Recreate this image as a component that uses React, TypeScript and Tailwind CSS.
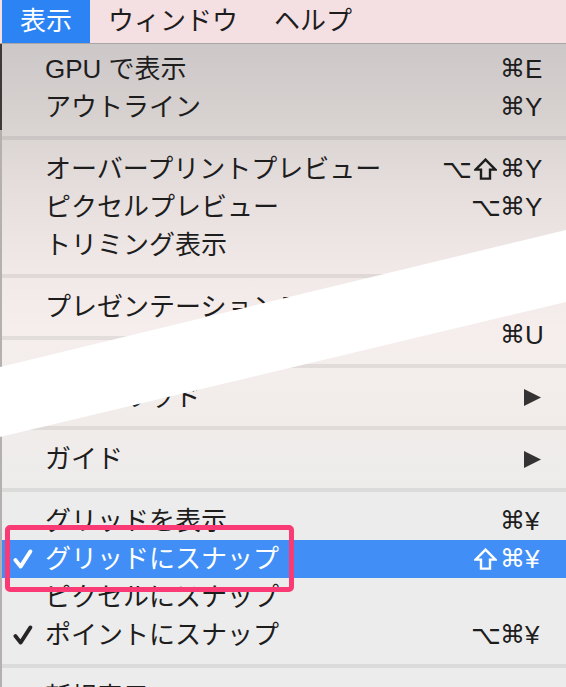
import React from "react";

type Item =
  | { kind: "sep" }
  | {
      kind: "row";
      label: string;
      mods?: string[];
      k?: string;
      sub?: boolean;
      check?: boolean;
      hi?: boolean;
    };

const topItems: Item[] = [
  { kind: "row", label: "GPU で表示", mods: ["⌘"], k: "E" },
  { kind: "row", label: "アウトライン", mods: ["⌘"], k: "Y" },
  { kind: "sep" },
  { kind: "row", label: "オーバープリントプレビュー", mods: ["⌥", "⇧", "⌘"], k: "Y" },
  { kind: "row", label: "ピクセルプレビュー", mods: ["⌥", "⌘"], k: "Y" },
  { kind: "row", label: "トリミング表示" },
  { kind: "sep" },
  { kind: "row", label: "プレゼンテーションモード" },
  { kind: "sep" },
  { kind: "row", label: "画面モード", sub: true },
];

const bottomItems: Item[] = [
  { kind: "row", label: "スマートガイド", mods: ["⌘"], k: "U" },
  { kind: "sep" },
  { kind: "row", label: "遠近グリッド", sub: true },
  { kind: "sep" },
  { kind: "row", label: "ガイド", sub: true },
  { kind: "sep" },
  { kind: "row", label: "グリッドを表示", mods: ["⌘"], k: "¥" },
  { kind: "row", label: "グリッドにスナップ", mods: ["⇧", "⌘"], k: "¥", check: true, hi: true },
  { kind: "row", label: "ピクセルにスナップ" },
  { kind: "row", label: "ポイントにスナップ", mods: ["⌥", "⌘"], k: "¥", check: true },
  { kind: "sep" },
  { kind: "row", label: "新規表示..." },
];

function Check({ color }: { color: string }) {
  return (
    <svg width="20" height="20" viewBox="0 0 20 20" className="ml-[11px]">
      <path
        d="M2.4 11 L7.6 17.6 L17.4 2.4"
        fill="none"
        stroke={color}
        strokeWidth="3.8"
        strokeLinecap="round"
        strokeLinejoin="round"
      />
    </svg>
  );
}

function Triangle() {
  return (
    <svg width="17" height="17" viewBox="0 0 17 17" className="mr-[25px] shrink-0">
      <polygon points="0,0 17,8.5 0,17" fill="#343232" />
    </svg>
  );
}

function ShiftIcon({ color }: { color: string }) {
  return (
    <svg width="23" height="22" viewBox="0 0 23 22">
      <path
        d="M11.5 1.6 L21.4 11.6 L16 11.6 L16 20.6 L7 20.6 L7 11.6 L1.6 11.6 Z"
        fill="none"
        stroke={color}
        strokeWidth="2.4"
        strokeLinejoin="miter"
      />
    </svg>
  );
}

function Shortcut({ mods, k, hi }: { mods: string[]; k: string; hi?: boolean }) {
  return (
    <div className="flex items-center mr-[20px] shrink-0 font-['DejaVu_Sans','Liberation_Sans',sans-serif] leading-[38px]">
      {mods.map((m, i) =>
        m === "⇧" ? (
          <span key={i} className="w-[29px] flex justify-center">
            <ShiftIcon color={hi ? "#ffffff" : "#1e1d1d"} />
          </span>
        ) : m === "⌘" ? (
          <span key={i} className="w-[25px] text-center text-[25px]">
            {m}
          </span>
        ) : (
          <span key={i} className="w-[29px] text-center text-[26px]">
            {m}
          </span>
        )
      )}
      <span className="w-[21px] text-left font-['Liberation_Sans','DejaVu_Sans',sans-serif] text-[26px]">
        {k}
      </span>
    </div>
  );
}

function Rows({ items }: { items: Item[] }) {
  return (
    <>
      {items.map((it, i) => {
        if (it.kind === "sep") {
          return (
            <div key={i} className="h-[24px] shrink-0 flex items-center">
              <div className="h-[4px] w-full bg-black/[0.07]" />
            </div>
          );
        }
        return (
          <div
            key={i}
            className={
              it.hi
                ? "relative flex items-center h-[38px] shrink-0 bg-[#418ff6] text-white"
                : "relative flex items-center h-[38px] shrink-0 text-[#1e1d1d]"
            }
          >
            <div className="w-[43px] h-full flex items-center shrink-0">
              {it.check && <Check color={it.hi ? "#ffffff" : "#262424"} />}
            </div>
            <div className="flex-1 text-[26px] leading-[38px] whitespace-nowrap overflow-hidden">
              {it.label}
            </div>
            {it.mods && it.k && <Shortcut mods={it.mods} k={it.k} hi={it.hi} />}
            {it.sub && <Triangle />}
            {it.hi && (
              <div className="absolute left-[3px] top-[-15px] w-[289px] h-[67px] border-[5px] border-[#f93a74] rounded-[5px] z-10" />
            )}
          </div>
        );
      })}
    </>
  );
}

const BG =
  "bg-[linear-gradient(180deg,#cdc8c8_44px,#d6d0cf_110px,#e5dedd_190px,#f1e9e7_270px,#f5eeec_330px,#f1ecea_420px,#ececec_500px)]";

export default function App() {
  return (
    <div className="grid grid-cols-1 grid-rows-1 w-[566px] h-[687px] overflow-hidden bg-white font-['Liberation_Sans','Noto_Sans_CJK_JP',sans-serif]">
      {/* upper part of the torn screenshot */}
      <div
        className={`col-start-1 row-start-1 min-h-0 overflow-hidden flex flex-col ${BG} [clip-path:polygon(0_0,100%_0,100%_230px,0_367px)]`}
      >
        <div className="h-[44px] shrink-0 flex bg-[#f4e0e3] border-b border-[#aaa5a6] text-[26px] leading-[43px] text-[#1e1d1d]">
          <div className="ml-[2px] px-[18px] bg-[#2c84f4] text-white">表示</div>
          <div className="px-[18px]">ウィンドウ</div>
          <div className="px-[18px]">ヘルプ</div>
        </div>
        <div className="flex flex-1 min-h-0">
          <div className="w-[2px] shrink-0 bg-[linear-gradient(180deg,#3d3939_0px,#3d3939_86px,#b4b0b0_86px)]" />
          <div className="flex-1 flex flex-col pt-[6px]">
            <Rows items={topItems} />
          </div>
        </div>
      </div>

      {/* lower part of the torn screenshot */}
      <div
        className={`col-start-1 row-start-1 min-h-0 overflow-hidden flex ${BG} [clip-path:polygon(0_437px,100%_302px,100%_100%,0_100%)]`}
      >
        <div className="w-[2px] shrink-0 bg-[#b4b0b0]" />
        <div className="flex-1 flex flex-col pt-[316px]">
          <Rows items={bottomItems} />
        </div>
      </div>
    </div>
  );
}
